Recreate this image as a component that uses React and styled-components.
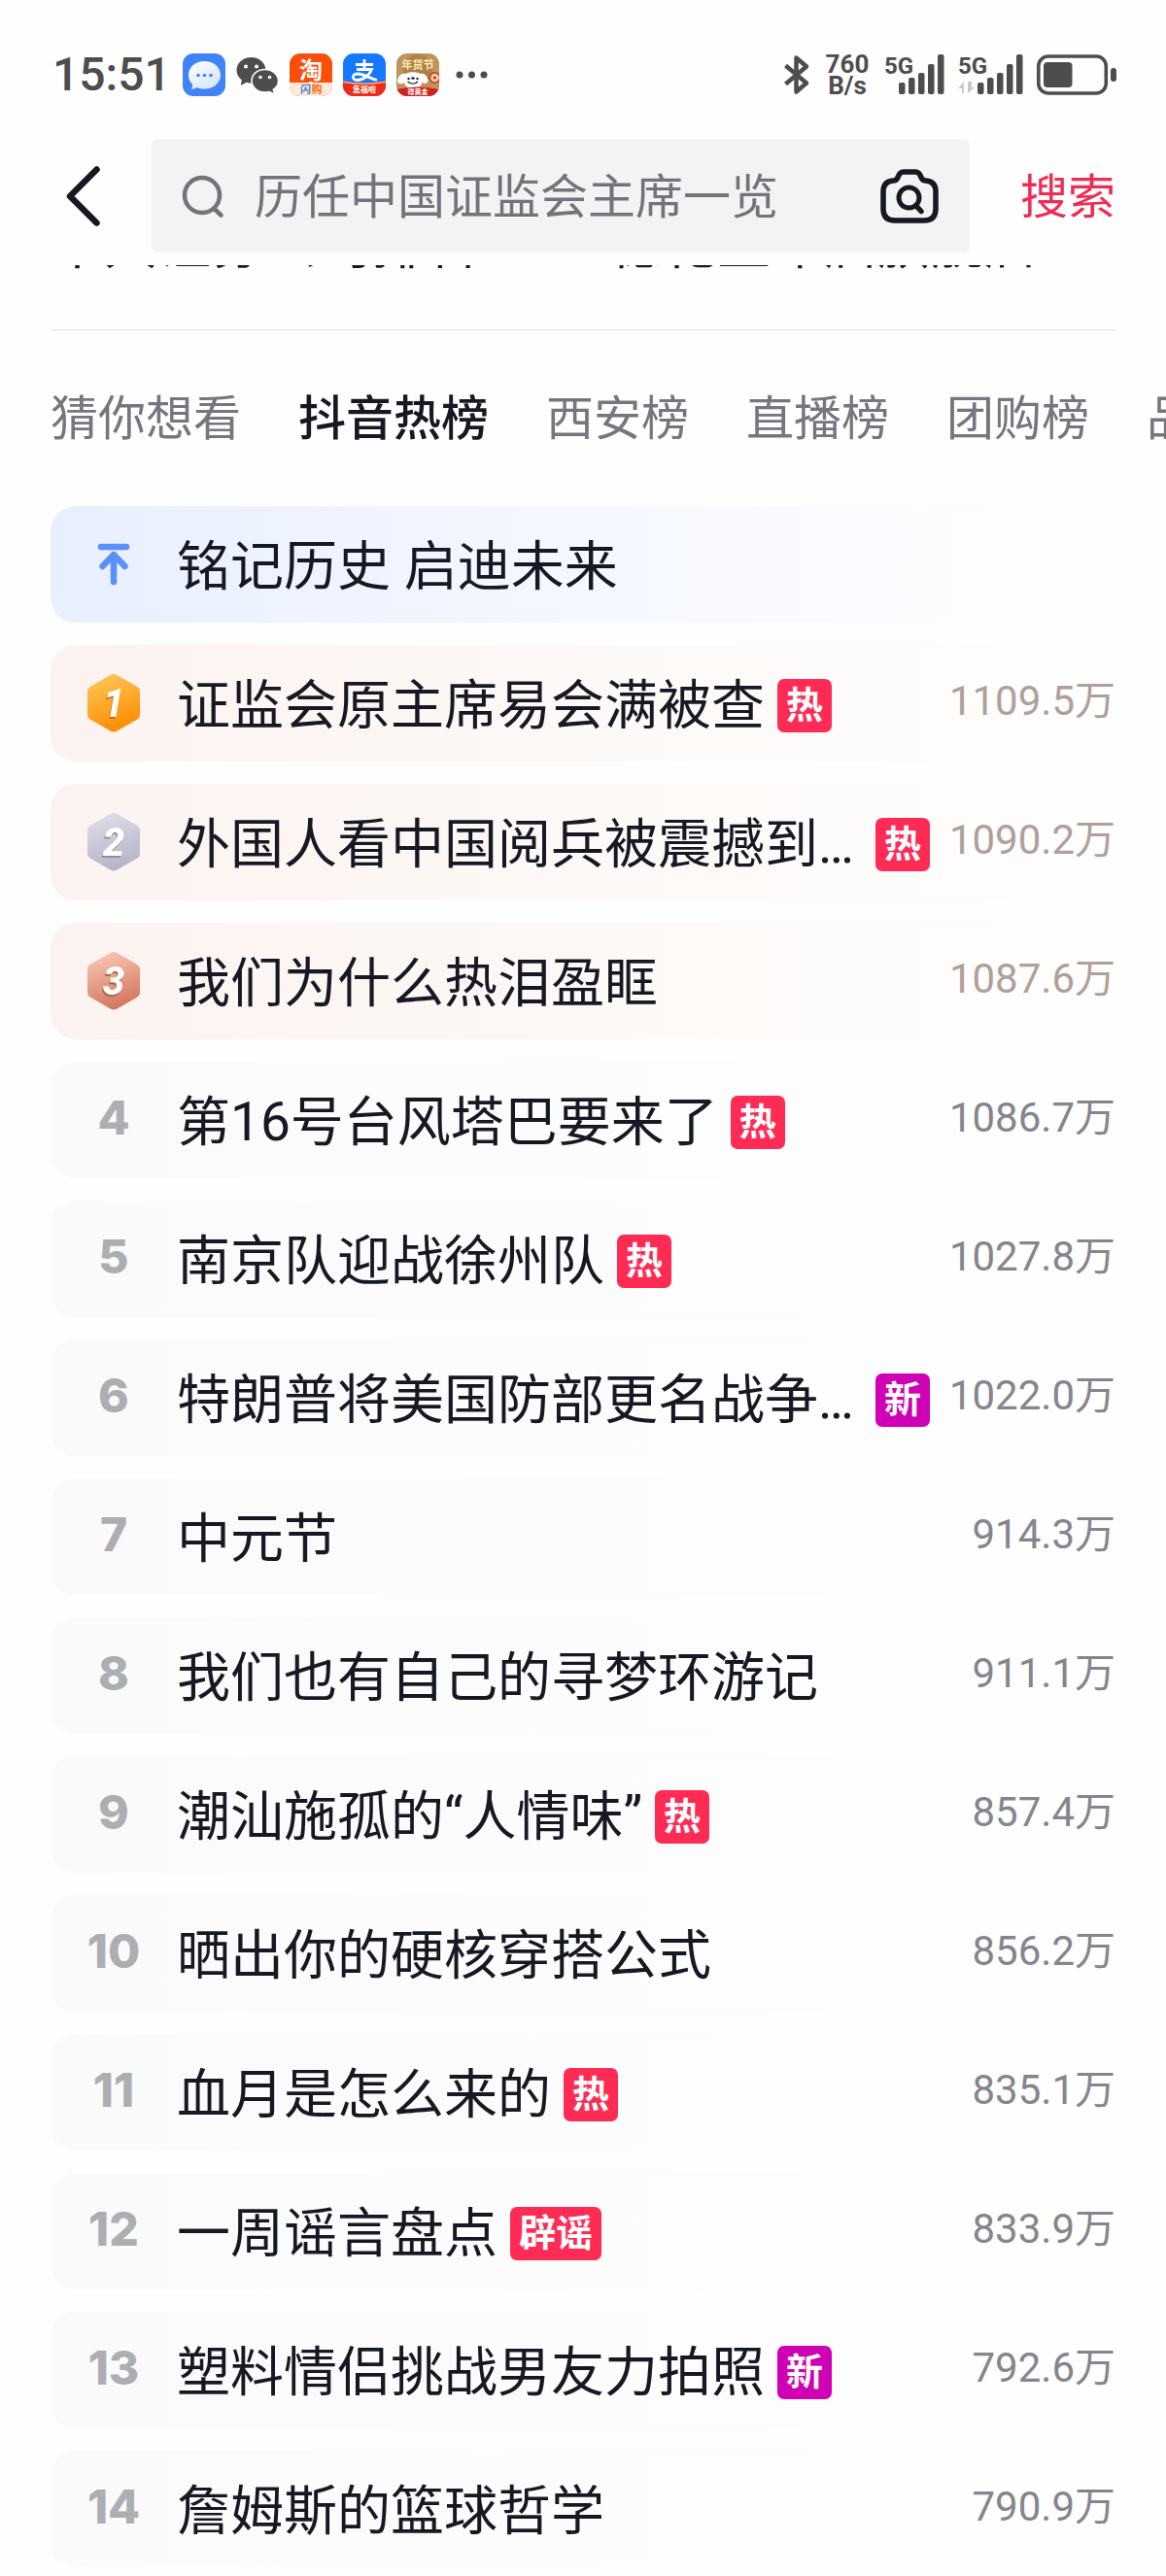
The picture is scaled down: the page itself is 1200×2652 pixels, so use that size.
import React from "react";
import styled, { createGlobalStyle, css } from "styled-components";

const tabs = ["猜你想看", "抖音热榜", "西安榜", "直播榜", "团购榜", "品牌榜"];

const suggestions = ["十大证券公司排名", "德化王年启旗舰店"];

const hotList = [
  { rank: 1, title: "证监会原主席易会满被查", tag: "热", value: "1109.5万" },
  { rank: 2, title: "外国人看中国阅兵被震撼到…", tag: "热", value: "1090.2万" },
  { rank: 3, title: "我们为什么热泪盈眶", value: "1087.6万" },
  { rank: 4, title: "第16号台风塔巴要来了", tag: "热", value: "1086.7万" },
  { rank: 5, title: "南京队迎战徐州队", tag: "热", value: "1027.8万" },
  { rank: 6, title: "特朗普将美国防部更名战争…", tag: "新", value: "1022.0万" },
  { rank: 7, title: "中元节", value: "914.3万" },
  { rank: 8, title: "我们也有自己的寻梦环游记", value: "911.1万" },
  { rank: 9, title: "潮汕施孤的“人情味”", tag: "热", value: "857.4万" },
  { rank: 10, title: "晒出你的硬核穿搭公式", value: "856.2万" },
  { rank: 11, title: "血月是怎么来的", tag: "热", value: "835.1万" },
  { rank: 12, title: "一周谣言盘点", tag: "辟谣", value: "833.9万" },
  { rank: 13, title: "塑料情侣挑战男友力拍照", tag: "新", value: "792.6万" },
  { rank: 14, title: "詹姆斯的篮球哲学", value: "790.9万" },
];

const medalColors = {
  1: ["#ffc556", "#ff8a00", "#c96a00"],
  2: ["#dddce8", "#b4b3c6", "#8f8e9a"],
  3: ["#fbc6b5", "#d0745a", "#a8654f"],
};

const MessageApp = () => (
  <svg width="44" height="44" viewBox="0 0 44 44" aria-hidden="true">
    <defs>
      <linearGradient id="bubble" x1="0" y1="0" x2="1" y2="1">
        <stop offset="0" stopColor="#ffffff" />
        <stop offset="1" stopColor="#cfe3fd" />
      </linearGradient>
    </defs>
    <rect width="44" height="44" rx="11" fill="#3f83f6" />
    <path
      d="M22.500 8c9.500 0 16.500 6.200 16.500 14.300S32 36.600 22.500 36.600c-3 0-5.400-.4-7.700-1.500-1.600 1-3.600 1.800-6 1.600 1-1.500 1.500-3 1.300-4.800C7.500 29.400 6 26.200 6 22.300 6 14.200 13 8 22.500 8z"
      fill="url(#bubble)"
    />
    <circle cx="16" cy="22.500" r="1.800" fill="#3f83f6" />
    <circle cx="22.500" cy="22.500" r="1.800" fill="#3f83f6" />
    <circle cx="29" cy="22.500" r="1.800" fill="#3f83f6" />
  </svg>
);

const WechatApp = () => (
  <svg width="44" height="44" viewBox="0 0 44 44" aria-hidden="true">
    <path
      d="M15.500 4C7 4 .5 9.800.5 17.300c0 4.200 2 7.600 5.300 10.200L4.800 33l5.800-3.200c1.600.5 3.200.8 4.900.8 8.400 0 15-6 15-13.300S24 4 15.500 4z"
      fill="#4d4d4d"
    />
    <path
      d="M29.500 16.500c-7.600 0-13.500 5.200-13.500 11.800S21.900 40 29.500 40c1.500 0 3-.2 4.300-.6l6.200 2.800-1.800-4.800c3.300-2.200 5.300-5.400 5.300-9.100 0-6.600-6.400-11.800-14-11.800z"
      fill="#4d4d4d"
      stroke="#fff"
      strokeWidth="1.500"
    />
    <circle cx="10" cy="13.500" r="2" fill="#fff" />
    <circle cx="21" cy="13.500" r="2" fill="#fff" />
    <circle cx="25" cy="24.500" r="1.800" fill="#fff" />
    <circle cx="34.500" cy="24.500" r="1.800" fill="#fff" />
  </svg>
);

const TaobaoApp = () => (
  <svg width="44" height="44" viewBox="0 0 44 44" aria-hidden="true">
    <defs>
      <clipPath id="tb">
        <rect width="44" height="44" rx="11" />
      </clipPath>
    </defs>
    <g clipPath="url(#tb)">
      <rect width="44" height="44" fill="#fa4f0b" />
      <path d="M0 30h19l3-1.500 3 1.500h19v14H0z" fill="#ffe9d8" />
    </g>
    <AppText x="22" y="26" fontSize="24" fill="#fff">
      淘
    </AppText>
    <AppText x="16.500" y="41" fontSize="11" fill="#3b82d9">
      闪
    </AppText>
    <AppText x="28" y="41" fontSize="11" fill="#f56a12">
      购
    </AppText>
  </svg>
);

const AlipayApp = () => (
  <svg width="44" height="44" viewBox="0 0 44 44" aria-hidden="true">
    <defs>
      <clipPath id="zfb">
        <rect width="44" height="44" rx="11" />
      </clipPath>
    </defs>
    <g clipPath="url(#zfb)">
      <rect width="44" height="44" fill="#1677ff" />
      <path d="M0 28.500q22 4 44 0V44H0z" fill="#ef2b16" />
      <path d="M0 28.500q22 4 44 0v1.600q-22 4-44 0z" fill="#ffb27a" />
    </g>
    <path
      d="M13 11.500h18M22 6v10.500M14 16.500h15.500C27.500 22 21 27.500 14.500 27.500c-5.500 0-5.500-6.500.5-6.500 6 0 12 4.500 20 6.500"
      fill="none"
      stroke="#fff"
      strokeWidth="2.800"
    />
    <AppText x="22" y="40" fontSize="8" fill="#fff">
      集福啦
    </AppText>
  </svg>
);

const JdApp = () => (
  <svg width="44" height="44" viewBox="0 0 44 44" aria-hidden="true">
    <defs>
      <clipPath id="jd">
        <rect width="44" height="44" rx="11" />
      </clipPath>
    </defs>
    <g clipPath="url(#jd)">
      <rect width="44" height="44" fill="#c0935a" />
      <circle cx="22" cy="16" r="15" fill="#b08049" />
      <circle cx="39.500" cy="25" r="6" fill="#d63a22" />
      <circle cx="39.500" cy="25" r="4.200" fill="#f7dcb4" />
      <rect x="38" y="23.500" width="3" height="3" fill="#d63a22" />
      <path
        d="M9 21c4-2.500 12-2.500 16 0 5-1 7 3 7.500 8-2 2.500-4.500 2-6 .5C25.500 34 22 36 17 36S9 34 8 30c-2 1.500-5 2-7-.5C1 25 4 20 9 21z"
        fill="#fff"
      />
      <circle cx="12.500" cy="26" r="1.200" fill="#222" />
      <circle cx="21.500" cy="26" r="1.200" fill="#222" />
      <ellipse cx="17" cy="25.500" rx="1.800" ry="1.200" fill="#222" />
      <path d="M11.500 29q5.500 4.500 10.500 0" fill="none" stroke="#222" strokeWidth="1.200" />
      <path d="M0 37q22-5 44 0v7H0z" fill="#d21f1c" />
    </g>
    <AppText x="22" y="16" fontSize="11" fill="#fff0b0">
      年货节
    </AppText>
    <AppText x="22" y="42" fontSize="7" fill="#fff">
      得黄金
    </AppText>
  </svg>
);

const MoreDots = () => (
  <svg width="34" height="8" viewBox="0 0 34 8" aria-hidden="true">
    <circle cx="4" cy="4" r="3.500" fill="#4d4d4d" />
    <circle cx="16.500" cy="4" r="3.500" fill="#4d4d4d" />
    <circle cx="29" cy="4" r="3.500" fill="#4d4d4d" />
  </svg>
);

const Bluetooth = () => (
  <svg width="28" height="42" viewBox="0 0 28 42" aria-hidden="true">
    <path
      d="M2.500 11.500L24 29.500 13.500 38.500V3.500L24 12.500 2.500 30.500"
      fill="none"
      stroke="#4d4d4d"
      strokeWidth="4.500"
      strokeLinejoin="round"
    />
  </svg>
);

const Signal = ({ idle }) => {
  const start = idle ? 20 : 15;
  const width = start + 47;
  return (
    <svg width={width} height="42" viewBox={`0 0 ${width} 42`} aria-hidden="true">
      <SignalText x="0" y="20">
        5G
      </SignalText>
      {idle && <path d="M0 35l6-7v12H4v-5zM10 28v12l7-6h-3v-6z" fill="#c9c9c9" />}
      {[12, 17, 22, 31, 41].map((h, i) => (
        <rect
          key={h}
          x={start + i * 10}
          y={41 - h}
          width="6.500"
          height={h}
          rx="2"
          fill="#4d4d4d"
        />
      ))}
    </svg>
  );
};

const Battery = () => (
  <svg width="82" height="42" viewBox="0 0 82 42" aria-hidden="true">
    <rect x="1.800" y="2" width="69.500" height="38" rx="10" fill="none" stroke="#4d4d4d" strokeWidth="3.600" />
    <rect x="7" y="8" width="29.500" height="26" rx="4" fill="#4d4d4d" />
    <rect x="76" y="14" width="6" height="14" rx="3" fill="#4d4d4d" />
  </svg>
);

const BackIcon = () => (
  <svg width="36" height="64" viewBox="0 0 36 64" aria-hidden="true">
    <path
      d="M31.500 4.500L4 32l27.500 27.500"
      fill="none"
      stroke="#161823"
      strokeWidth="6.500"
      strokeLinecap="round"
      strokeLinejoin="round"
    />
  </svg>
);

const SearchIcon = () => (
  <svg width="44" height="44" viewBox="0 0 44 44" aria-hidden="true">
    <circle cx="21" cy="21" r="18" fill="none" stroke="#72737b" strokeWidth="4.500" />
    <path d="M33 34.500l7.500 7" stroke="#72737b" strokeWidth="4.500" strokeLinecap="round" />
  </svg>
);

const CameraIcon = () => (
  <svg width="60" height="56" viewBox="0 0 60 56" aria-hidden="true">
    <path
      d="M24 3h12q3 0 4.500 2.500l2 4Q44 12 47 12q10 1 10 11v18q0 12-12 12H15Q3 53 3 41V23q0-10 10-11 3 0 4.500-2.500l2-4Q21 3 24 3z"
      fill="none"
      stroke="#161823"
      strokeWidth="5.500"
      strokeLinejoin="round"
    />
    <circle cx="29.500" cy="29.500" r="10.500" fill="none" stroke="#161823" strokeWidth="5" />
    <path d="M36.500 37.500l5.500 6" stroke="#161823" strokeWidth="5.500" strokeLinecap="round" />
  </svg>
);

const PinIcon = () => (
  <svg width="34" height="44" viewBox="0 0 34 44" aria-hidden="true">
    <g fill="none" stroke="#5b8ff9" strokeWidth="6.500" strokeLinecap="round" strokeLinejoin="round">
      <path d="M4 4h26" />
      <path d="M17 13v27" />
      <path d="M5.500 24L17 12l11.500 12" />
    </g>
  </svg>
);

const Medal = ({ rank }) => {
  const [from, to, shade] = medalColors[rank];
  return (
    <svg width="54" height="62" viewBox="0 0 54 62" role="img" aria-label={`${rank}`}>
      <defs>
        <linearGradient id={`medal${rank}`} x1="0.300" y1="0" x2="0.600" y2="1">
          <stop offset="0" stopColor={from} />
          <stop offset="1" stopColor={to} />
        </linearGradient>
      </defs>
      <path
        d="M24 1.800q3-1.600 6 0l21 12q3 1.800 3 5v24q0 3.200-3 5l-21 12q-3 1.600-6 0l-21-12q-3-1.800-3-5v-24q0-3.200 3-5z"
        fill={`url(#medal${rank})`}
      />
      <MedalText x="27" y="45" $shade={shade}>
        {rank}
      </MedalText>
    </svg>
  );
};

const App = () => {
  return (
    <Page>
      <GlobalStyle />
      <StatusBar>
        <Clock>15:51</Clock>
        <AppIcons>
          <MessageApp />
          <WechatApp />
          <TaobaoApp />
          <AlipayApp />
          <JdApp />
        </AppIcons>
        <MoreDots />
        <SystemIcons>
          <Bluetooth />
          <NetSpeed>
            <span>760</span>
            <span>B/s</span>
          </NetSpeed>
          <Signal />
          <Signal idle />
          <Battery />
        </SystemIcons>
      </StatusBar>

      <SearchHeader>
        <IconButton type="button" aria-label="返回">
          <BackIcon />
        </IconButton>
        <SearchBox>
          <SearchIcon />
          <SearchInput type="text" aria-label="搜索" placeholder="历任中国证监会主席一览" />
          <IconButton type="button" aria-label="拍照搜索">
            <CameraIcon />
          </IconButton>
        </SearchBox>
        <SearchButton type="button">搜索</SearchButton>
      </SearchHeader>

      <Suggestions>
        {suggestions.map((text) => (
          <Suggestion key={text} href="#">
            {text}
          </Suggestion>
        ))}
      </Suggestions>

      <Tabs>
        {tabs.map((tab) => (
          <Tab key={tab} type="button" $active={tab === "抖音热榜"}>
            {tab}
          </Tab>
        ))}
      </Tabs>

      <List>
        <Row>
          <RowLink href="#" $tone="pinned">
            <RankCell>
              <PinIcon />
            </RankCell>
            <Title>铭记历史 启迪未来</Title>
          </RowLink>
        </Row>
        {hotList.map(({ rank, title, tag, value }) => (
          <Row key={rank}>
            <RowLink href="#" $tone={rank <= 3 ? "top" : "normal"}>
              <RankCell>{rank <= 3 ? <Medal rank={rank} /> : rank}</RankCell>
              <Title $fill={title.endsWith("…")}>{title}</Title>
              {tag && <Tag $isNew={tag === "新"}>{tag}</Tag>}
              <Value $warm={rank <= 3}>{value}</Value>
            </RowLink>
          </Row>
        ))}
      </List>
    </Page>
  );
};

const GlobalStyle = createGlobalStyle`
  * {
    box-sizing: border-box;
  }
  body {
    margin: 0;
    background: #fefefe;
    color: #161823;
    font-family: Roboto, "Noto Sans CJK SC", sans-serif;
  }
  button, input {
    margin: 0;
    padding: 0;
    border: 0;
    background: none;
    font-family: inherit;
    color: inherit;
  }
  a {
    color: inherit;
    text-decoration: none;
  }
  svg {
    display: block;
    flex-shrink: 0;
    overflow: visible;
  }
`;

const Page = styled.div`
  overflow: hidden;
  padding-bottom: 9px;
`;

const StatusBar = styled.div`
  display: flex;
  align-items: center;
  height: 143px;
  padding: 11px 51px 0 54px;
  color: #4d4d4d;
`;

const Clock = styled.span`
  width: 134px;
  font-size: 48px;
  line-height: 44px;
  font-weight: 500;
`;

const AppIcons = styled.div`
  display: flex;
  gap: 11px;
  margin-right: 17px;
`;

const AppText = styled.text`
  font-family: "Noto Sans CJK SC", sans-serif;
  font-weight: 700;
  text-anchor: middle;
`;

const SignalText = styled.text`
  font-size: 24px;
  font-weight: 700;
  fill: #4d4d4d;
`;

const SystemIcons = styled.div`
  display: flex;
  align-items: center;
  gap: 14px;
  margin-left: auto;
`;

const NetSpeed = styled.div`
  display: flex;
  flex-direction: column;
  align-items: center;
  width: 48px;
  font-size: 26px;
  line-height: 22px;
  font-weight: 700;
`;

const SearchHeader = styled.header`
  display: flex;
  align-items: center;
  gap: 52px;
  padding: 0 52px 13px 68px;
`;

const IconButton = styled.button`
  flex-shrink: 0;
`;

const SearchBox = styled.div`
  flex: 1;
  min-width: 0;
  display: flex;
  align-items: center;
  height: 117px;
  padding: 0 32px 0 31px;
  border-radius: 7px;
  background: #f3f3f3;
`;

const SearchInput = styled.input`
  flex: 1;
  min-width: 0;
  height: 76px;
  margin: 0 31px;
  padding-top: 4px;
  font-size: 49px;
  outline: none;
  &::placeholder {
    color: #72737b;
    opacity: 1;
  }
`;

const SearchButton = styled.button`
  padding-top: 4px;
  font-size: 49px;
  line-height: 72px;
  color: #f02c55;
`;

/* scrolled away under the header, only the foot of the text shows */
const Suggestions = styled.div`
  display: flex;
  align-items: flex-end;
  gap: 56px;
  height: 67px;
  margin: 0 52px;
  padding-bottom: 59px;
  border-bottom: 1px solid #e2e2e2;
  overflow: hidden;
`;

const Suggestion = styled.a`
  flex: 1;
  font-size: 55px;
  line-height: 55px;
  white-space: nowrap;
`;

const Tabs = styled.nav`
  display: flex;
  gap: 59px;
  padding: 62px 0 59px 52px;
  overflow: hidden;
`;

const Tab = styled.button`
  flex-shrink: 0;
  font-size: 49px;
  line-height: 60px;
  white-space: nowrap;
  color: ${({ $active }) => ($active ? "#161823" : "#75767e")};
  font-weight: ${({ $active }) => ($active ? 500 : 400)};
`;

const List = styled.ol`
  display: flex;
  flex-direction: column;
  gap: 23px;
  margin: 0;
  padding: 0 52px;
  list-style: none;
`;

const Row = styled.li``;

const tones = {
  pinned: css`
    background: linear-gradient(90deg, #e8efff, #f5f8ff 52%, #fefefe 96%);
  `,
  top: css`
    background: linear-gradient(90deg, #fcf3f0, #fdf8f5 45%, #fefefe 96%);
  `,
  normal: css`
    background: linear-gradient(90deg, #fafafa, #fefefe 90%);
  `,
};

const RowLink = styled.a`
  display: flex;
  align-items: center;
  height: 120px;
  padding-bottom: 4px;
  border-radius: 26px;
  ${({ $tone }) => tones[$tone]}
`;

const RankCell = styled.span`
  flex-shrink: 0;
  display: flex;
  justify-content: center;
  width: 130px;
  font-family: Inter, sans-serif;
  font-size: 48px;
  line-height: 60px;
  font-weight: 800;
  color: #adaeb2;
  svg {
    margin-top: 3px;
  }
`;

const MedalText = styled.text`
  font-family: Roboto, sans-serif;
  font-size: 40px;
  font-style: italic;
  font-weight: 800;
  text-anchor: middle;
  fill: #fff;
  filter: drop-shadow(-1px 2px 0 ${({ $shade }) => $shade});
`;

const Title = styled.span`
  flex-grow: ${({ $fill }) => ($fill ? 1 : 0)};
  padding-top: 8px;
  font-size: 55px;
  line-height: 72px;
  white-space: nowrap;
`;

const Tag = styled.span`
  flex-shrink: 0;
  margin: 8px 20px 0 13px;
  padding: 0 9px;
  border-radius: 7px;
  font-size: 38px;
  line-height: 55px;
  font-weight: 700;
  color: #fff;
  background: ${({ $isNew }) => ($isNew ? "#d000b4" : "#fe2c55")};
`;

const Value = styled.span`
  margin-left: auto;
  font-size: 42px;
  line-height: 60px;
  color: ${({ $warm }) => ($warm ? "#b0a09a" : "#85868c")};
`;

export default App;
